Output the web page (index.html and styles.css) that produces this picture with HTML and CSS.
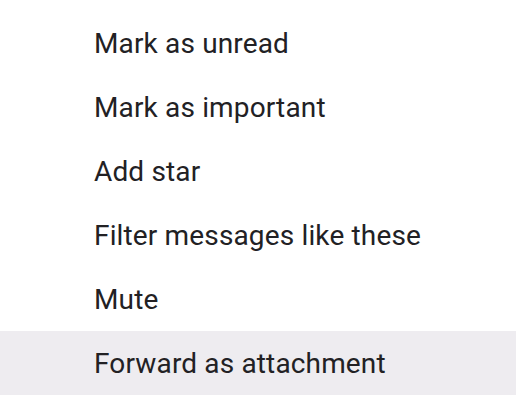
FILE: index.html
```html
<!DOCTYPE html>
<html>
<head>
<meta charset="utf-8">
<link rel="stylesheet" href="styles.css">
</head>
<body>
<ul class="menu">
  <li class="item">Mark as unread</li>
  <li class="item">Mark as important</li>
  <li class="item">Add star</li>
  <li class="item">Filter messages like these</li>
  <li class="item">Mute</li>
  <li class="item item-hover">Forward as attachment</li>
</ul>
</body>
</html>
```
FILE: styles.css
```css
html, body {
  margin: 0;
  padding: 0;
  background: #ffffff;
}
body {
  width: 516px;
  height: 402px;
  overflow: hidden;
  font-family: Roboto, "Noto Sans", sans-serif;
}
.menu {
  list-style: none;
  margin: 0;
  padding: 11px 0 0 0;
}
.item {
  height: 64px;
  display: flex;
  align-items: center;
  padding-left: 94px;
  font-size: 28px;
  color: #222124;
  letter-spacing: 0.15px;
}
.item-hover {
  background: #eeecf0;
}
```
